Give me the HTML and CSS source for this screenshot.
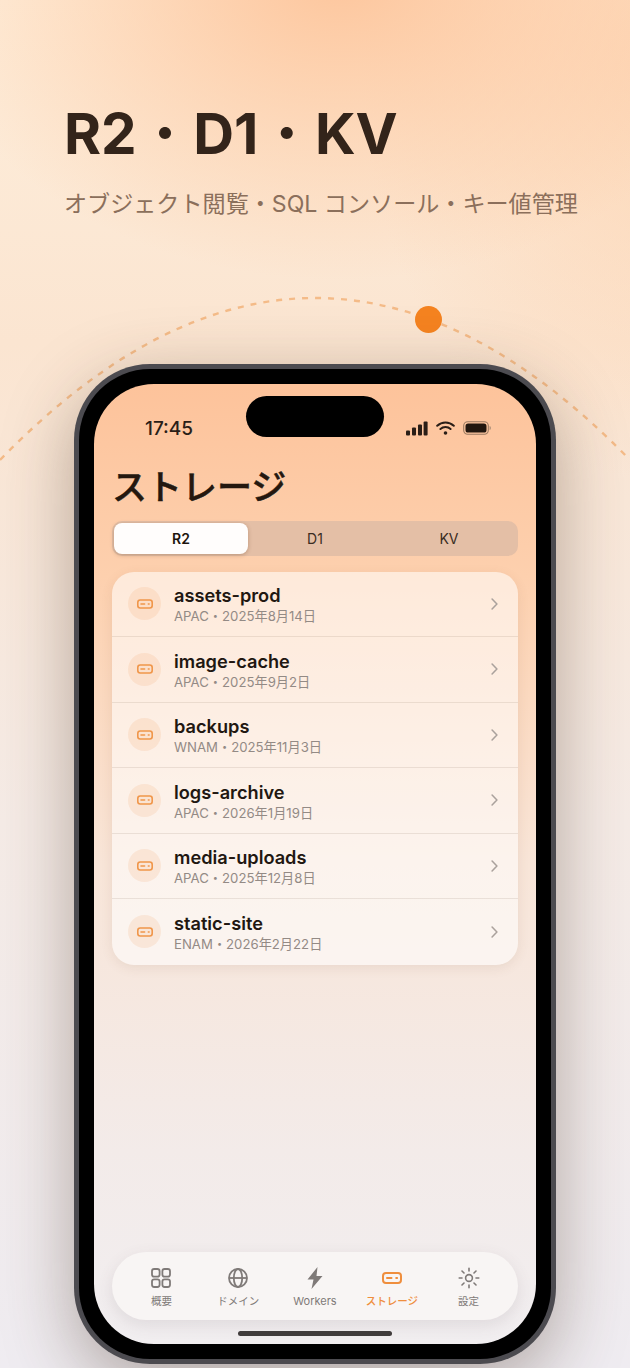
FILE: index.html
```html
<!DOCTYPE html>
<html lang="ja">
<head>
<meta charset="utf-8">
<title>R2・D1・KV</title>
<link rel="stylesheet" href="styles.css">
</head>
<body>
<svg width="0" height="0" class="defs">
  <symbol id="drive" viewBox="0 0 20 12"><rect x="1" y="1" width="18" height="10" rx="3" fill="none" stroke="currentColor" stroke-width="2"/><path d="M5 6h4.5M14.2 6h.9" stroke="currentColor" stroke-width="2" stroke-linecap="round" fill="none"/></symbol>
  <symbol id="chev" viewBox="0 0 8 14"><path d="M1.2 1.2 6.8 7l-5.600 5.800" fill="none" stroke="currentColor" stroke-width="1.8" stroke-linecap="round" stroke-linejoin="round"/></symbol>
</svg>
<main class="poster">
  <svg class="arc" viewBox="0 0 630 480" width="630" height="480"><path d="M0 460Q315 136 630 460" fill="none" stroke="#f4bb88" stroke-width="2.4" stroke-dasharray="6 7"/></svg>
  <div class="dot"></div>
  <header class="hero">
    <h1>R2<span class="jp">・</span>D1<span class="jp">・</span>KV</h1>
    <p>オブジェクト閲覧<span class="jp">・</span>SQL コンソール<span class="jp">・</span>キー値管理</p>
  </header>
  <div class="phone">
    <div class="bezel">
      <div class="screen">
        <div class="island"></div>
        <div class="status">
          <span class="time">17:45</span>
          <div class="status-icons">
            <svg width="22" height="15" viewBox="0 0 22 15"><g fill="#2a1e17"><rect x="0" y="9.5" width="4" height="5" rx="1"/><rect x="6" y="6.5" width="4" height="8" rx="1"/><rect x="12" y="3.5" width="4" height="11" rx="1"/><rect x="17.6" y="0.5" width="4" height="14" rx="1"/></g></svg>
            <svg width="19" height="14" viewBox="0 0 19 14"><g fill="none" stroke="#2a1e17" stroke-width="2" stroke-linecap="round"><path d="M1.2 4.8a12 12 0 0 1 16.6 0"/><path d="M4.4 8a7.6 7.6 0 0 1 10.2 0"/></g><circle cx="9.5" cy="12" r="1.8" fill="#2a1e17"/></svg>
            <svg width="28" height="14" viewBox="0 0 28 14"><rect x="0.7" y="0.7" width="24.6" height="12.6" rx="4" fill="none" stroke="#9a7a60" stroke-width="1.1"/><rect x="2.5" y="2.5" width="21" height="9" rx="2.6" fill="#22170f"/><path d="M26.6 5v4c.9-.3 1.2-1.1 1.2-2s-.3-1.700-1.200-2z" fill="#a58a74"/></svg>
          </div>
        </div>
        <h2 class="page-title">ストレージ</h2>
        <div class="segments">
          <div class="segment active">R2</div>
          <div class="segment">D1</div>
          <div class="segment">KV</div>
        </div>
        <ul class="list">
          <li class="row"><span class="badge"><svg class="drive"><use href="#drive"/></svg></span><div class="info"><b>assets-prod</b><small>APAC<span class="jp">・</span>2025年8月14日</small></div><svg class="chev"><use href="#chev"/></svg></li>
          <li class="row"><span class="badge"><svg class="drive"><use href="#drive"/></svg></span><div class="info"><b>image-cache</b><small>APAC<span class="jp">・</span>2025年9月2日</small></div><svg class="chev"><use href="#chev"/></svg></li>
          <li class="row"><span class="badge"><svg class="drive"><use href="#drive"/></svg></span><div class="info"><b>backups</b><small>WNAM<span class="jp">・</span>2025年11月3日</small></div><svg class="chev"><use href="#chev"/></svg></li>
          <li class="row"><span class="badge"><svg class="drive"><use href="#drive"/></svg></span><div class="info"><b>logs-archive</b><small>APAC<span class="jp">・</span>2026年1月19日</small></div><svg class="chev"><use href="#chev"/></svg></li>
          <li class="row"><span class="badge"><svg class="drive"><use href="#drive"/></svg></span><div class="info"><b>media-uploads</b><small>APAC<span class="jp">・</span>2025年12月8日</small></div><svg class="chev"><use href="#chev"/></svg></li>
          <li class="row"><span class="badge"><svg class="drive"><use href="#drive"/></svg></span><div class="info"><b>static-site</b><small>ENAM<span class="jp">・</span>2026年2月22日</small></div><svg class="chev"><use href="#chev"/></svg></li>
        </ul>
        <nav class="tabbar">
          <div class="tab">
            <svg width="22" height="22" viewBox="0 0 22 22" fill="none" stroke="currentColor" stroke-width="1.8"><rect x="2" y="2" width="7.6" height="7.6" rx="2.2"/><rect x="12.400" y="2" width="7.6" height="7.6" rx="2.2"/><rect x="2" y="12.400" width="7.6" height="7.6" rx="2.2"/><rect x="12.400" y="12.400" width="7.6" height="7.6" rx="2.2"/></svg>
            <span>概要</span>
          </div>
          <div class="tab">
            <svg width="22" height="22" viewBox="0 0 22 22" fill="none" stroke="currentColor" stroke-width="1.8"><circle cx="11" cy="11" r="9"/><ellipse cx="11" cy="11" rx="4.2" ry="9"/><path d="M2 11h18"/></svg>
            <span>ドメイン</span>
          </div>
          <div class="tab">
            <svg width="22" height="22" viewBox="0 0 22 22"><path d="M13.500 0 3.500 12.500h6L7.500 22 18.500 9H12.500z" fill="currentColor"/></svg>
            <span class="latin">Workers</span>
          </div>
          <div class="tab current">
            <svg class="tab-drive" width="20" height="12"><use href="#drive"/></svg>
            <span>ストレージ</span>
          </div>
          <div class="tab">
            <svg width="22" height="22" viewBox="0 0 22 22" fill="none" stroke="currentColor" stroke-width="1.6" stroke-linecap="round"><circle cx="11" cy="11" r="3.4"/><path d="M11 1.200v2.800M11 18v2.800M1.200 11H4M18 11h2.800M4 4l2 2M16 16l2 2M18 4l-2 2M6 16l-2 2"/></svg>
            <span>設定</span>
          </div>
        </nav>
        <div class="home"></div>
      </div>
    </div>
  </div>
</main>
</body>
</html>
```
FILE: styles.css
```css
* { box-sizing: border-box; margin: 0; padding: 0; }
html, body { width: 630px; height: 1368px; overflow: hidden; }
body { font-family: Inter, "Noto Sans CJK JP", sans-serif; color: #2a1e17; }
.defs { position: absolute; }
.jp { font-family: "Noto Sans CJK JP", sans-serif; font-weight: 400; }
.poster {
  position: relative;
  width: 630px;
  height: 1368px;
  overflow: hidden;
  padding-top: 92px;
  background:
    radial-gradient(ellipse 420px 300px at 340px -20px, #fdc69d 0%, rgba(253,198,157,0) 100%),
    radial-gradient(ellipse 300px 420px at 660px 60px, rgba(253,210,175,.8) 0%, rgba(253,210,175,0) 100%),
    linear-gradient(180deg, #feeedb 0%, #fbe5d1 25%, #f5ebe6 60%, #efecf1 100%);
}
.arc { position: absolute; left: 0; top: 0; }
.dot { position: absolute; left: 415px; top: 306px; width: 27px; height: 27px; border-radius: 50%; background: #f58320; }
.hero { position: relative; padding-left: 64px; }
.hero h1 { height: 75px; font-size: 56.5px; line-height: 75px; font-weight: 700; color: #33241a; white-space: nowrap; }
.hero p { height: 36px; margin-top: 17px; font-size: 23.1px; line-height: 36px; color: #8b6f5b; white-space: nowrap; }
.phone {
  position: relative;
  width: 482px;
  height: 1000px;
  margin: 144px 0 0 74px;
  padding: 5px;
  border-radius: 76px;
  background: #4c4b50;
  box-shadow: 0 20px 70px rgba(70,50,35,.38);
}
.bezel { width: 100%; height: 100%; padding: 15px; background: #000; border-radius: 71px; }
.screen {
  position: relative;
  display: flex;
  flex-direction: column;
  height: 100%;
  padding: 0 18px;
  border-radius: 60px;
  overflow: hidden;
  background: linear-gradient(180deg, #fdc39b 0%, #fdd0ae 20%, #f8e5d8 50%, #f3ebe9 80%, #f1eef0 100%);
}
.island { position: absolute; left: 152px; top: 12px; width: 138px; height: 41px; border-radius: 21px; background: #000; }
.status { display: flex; justify-content: space-between; align-items: center; height: 28px; margin-top: 30px; padding: 0 27px 0 33px; }
.time { font-size: 19px; font-weight: 500; color: #2a1e17; }
.status-icons { display: flex; align-items: center; gap: 8px; }
.page-title { margin-top: 20px; font-size: 35px; line-height: 50px; font-weight: 500; color: #24180f; -webkit-text-stroke: 0.5px #24180f; }
.segments { display: flex; height: 35px; margin-top: 9px; padding: 2px; border-radius: 10px; background: #e4bfa6; }
.segment { flex: 1; display: flex; align-items: center; justify-content: center; font-size: 14px; font-weight: 400; color: #3a2c22; border-radius: 8px; }
.segment.active { font-weight: 600; color: #1d140d; background: #fffdfc; box-shadow: 0 1px 4px rgba(90,50,20,.3); }
.list { list-style: none; margin-top: 15.5px; border-radius: 22px; background: rgba(255,255,255,.55); box-shadow: 0 3px 12px rgba(120,80,50,.1); }
.row { display: flex; align-items: center; height: 65.5px; padding: 0 20px 0 16px; border-bottom: 1px solid rgba(110,80,60,.12); }
.row:last-child { border-bottom: 0; }
.badge { display: flex; align-items: center; justify-content: center; flex: none; width: 33px; height: 33px; border-radius: 50%; background: rgba(243,150,80,.14); color: #f0964a; }
.drive { width: 16px; height: 10px; }
.info { flex: 1; display: flex; flex-direction: column; margin-left: 13px; padding-top: 3px; }
.info b { font-size: 18.2px; line-height: 22px; font-weight: 600; color: #211711; }
.info small { font-size: 13.2px; line-height: 19px; color: #938a85; white-space: nowrap; }
.chev { width: 7px; height: 12px; color: #aaa19c; }
.tabbar {
  position: absolute;
  left: 18px;
  right: 18px;
  bottom: 24px;
  display: flex;
  height: 68px;
  padding: 0 11px;
  border-radius: 34px;
  background: #f8f5f4;
  box-shadow: 0 5px 16px rgba(90,70,80,.12);
}
.tab { flex: 1; display: flex; flex-direction: column; align-items: center; justify-content: center; gap: 5px; padding-top: 4px; color: #7f7a78; height: 100%; }
.tab span { font-size: 10.5px; line-height: 15px; font-weight: 400; white-space: nowrap; }
.tab span.latin { font-size: 11px; }
.tab svg { height: 22px; flex: none; }
.tab.current { color: #ef8e3d; }
.tab.current span { font-weight: 500; }
.tab-drive { padding: 5px 0; }
.home { position: absolute; left: 144px; bottom: 8px; width: 154px; height: 5px; border-radius: 3px; background: #403c3c; }
```
